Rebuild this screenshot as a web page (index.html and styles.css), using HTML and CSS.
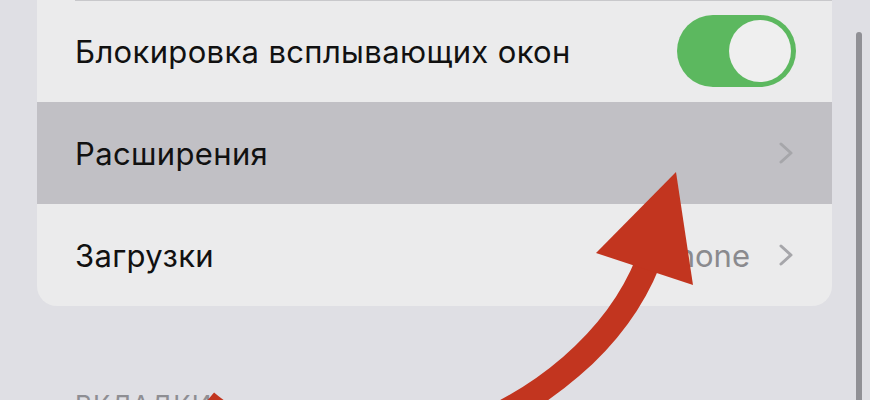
FILE: index.html
```html
<!DOCTYPE html>
<html>
<head>
    <title>Safari</title>
    <link rel="stylesheet" href="styles.css">
</head>
<body>
    <div class="settings">
        <div class="group">
            <div class="row first">
                <span class="label">Блокировка всплывающих окон</span>
                <div class="switch on"><div class="knob"></div></div>
            </div>
            <div class="row pressed">
                <span class="label">Расширения</span>
                <svg class="chevron" viewBox="0 0 14 22"><polyline points="2,2 12,11 2,20"/></svg>
            </div>
            <div class="row">
                <span class="label">Загрузки</span>
                <span class="value">iPhone</span>
                <svg class="chevron" viewBox="0 0 14 22"><polyline points="2,2 12,11 2,20"/></svg>
            </div>
        </div>
        <div class="section-title">ВКЛАДКИ</div>
    </div>

    <div class="scroll-indicator"></div>

    <!-- hand-drawn pointer to the extensions row -->
    <svg class="pointer" viewBox="0 0 870 400">
        <path d="M 206 402 C 340 515, 585 420, 648 262" />
        <polygon points="676,172 596,253 693,285" />
    </svg>
</body>
</html>
```

FILE: styles.css
```css
body {
    margin: 0;
    height: 400px;
    overflow: hidden;
    background: #dfdfe4;
    font-family: Inter, "Noto Sans", sans-serif;
    color: #111;
}

.settings {
    padding: 0 38px 0 37px;
}

.group {
    background: #ebebec;
    border-radius: 0 0 20px 20px;
    overflow: hidden;
}

.row {
    position: relative;
    display: flex;
    align-items: center;
    height: 102px;
    padding: 0 36px 0 38px;
}

.row.first::before {
    content: "";
    position: absolute;
    top: 0;
    left: 38px;
    right: 0;
    height: 1px;
    background: #c8c8cb;
}

.row.pressed {
    background: #c1c0c5;
}

.label {
    flex: 1;
    font-size: 31px;
    letter-spacing: 0.35px;
}

.value {
    font-size: 31px;
    color: #8a8a8e;
    margin-right: 29px;
}

.chevron {
    width: 14px;
    height: 22px;
    margin-right: 3px;
    fill: none;
    stroke: #a6a6aa;
    stroke-width: 3;
    stroke-linecap: round;
    stroke-linejoin: round;
}

.switch {
    width: 119px;
    height: 72px;
    border-radius: 36px;
    background: #5cb85f;
    display: flex;
    align-items: center;
    justify-content: flex-end;
    padding: 0 5px;
    box-sizing: border-box;
}

.knob {
    width: 62px;
    height: 62px;
    border-radius: 50%;
    background: #efefef;
}

.section-title {
    padding: 84px 0 0 38px;
    font-size: 26px;
    line-height: 30px;
    color: #8e8e93;
    letter-spacing: 1px;
}

.scroll-indicator {
    position: absolute;
    left: 856px;
    top: 32px;
    width: 6px;
    height: 400px;
    border-radius: 3px;
    background: #909095;
}

.pointer {
    position: absolute;
    left: 0;
    top: 0;
    width: 870px;
    height: 400px;
    pointer-events: none;
}

.pointer path {
    fill: none;
    stroke: #c2351f;
    stroke-width: 25;
}

.pointer polygon {
    fill: #c2351f;
}
```
